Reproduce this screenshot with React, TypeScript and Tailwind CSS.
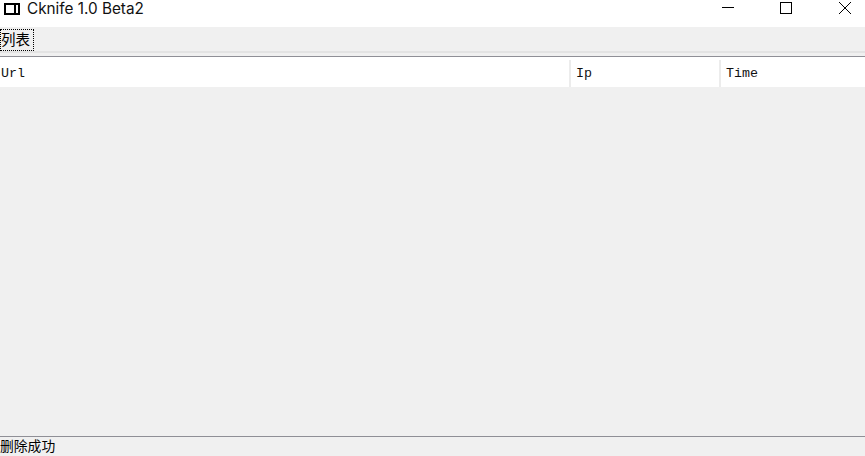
export default function App() {
  const cjk = "font-['Noto_Sans_CJK_SC',sans-serif]";

  return (
    <div className="flex h-[456px] w-[865px] flex-col overflow-hidden bg-[#f0f0f0] text-black">
      {/* title bar */}
      <div className="flex h-[27px] items-start bg-white">
        <div className="ml-[4px] mt-[3px] flex h-[12px] w-[16px] justify-end border-2 border-black">
          <div className="mr-[2px] w-[2px] bg-black"></div>
        </div>
        <div className="ml-[7px] font-['Inter',sans-serif] text-[15.3px] leading-[17px] text-[#111]">Cknife 1.0 Beta2</div>
        <div className="ml-auto flex items-start">
          <svg width="14" height="14" viewBox="0 0 14 14" className="mr-[45px]">
            <path d="M2 7.5H14" stroke="#000" strokeWidth="1" />
          </svg>
          <svg width="13" height="13" viewBox="0 0 13 13" className="mr-[46px] mt-[1px]">
            <rect x="1.5" y="1.5" width="11" height="11" fill="none" stroke="#000" strokeWidth="1" />
          </svg>
          <svg width="14" height="14" viewBox="0 0 14 14" className="mr-[13px] mt-[1px]">
            <path d="M1 1L13 13M13 1L1 13" stroke="#000" strokeWidth="1" />
          </svg>
        </div>
      </div>

      {/* tabs */}
      <div className="flex h-[26px] items-start border-b-2 border-[#e3e3e3]">
        <div className={`mt-[2px] flex h-[22px] w-[34px] items-start border border-dotted border-black ${cjk} text-[14.5px] leading-[17px]`}>
          列表
        </div>
      </div>

      {/* table */}
      <div className="mt-[3px] flex h-[31px] border-t border-[#8f8f96] bg-white pt-[3px] font-['Liberation_Mono',monospace] text-[13.33px] text-[#111]">
        <div className="flex w-[569px] items-center pl-[1px]">Url</div>
        <div className="flex w-[150px] items-center border-l-2 border-[#ececec] pl-[5px]">Ip</div>
        <div className="flex flex-1 items-center border-l-2 border-[#ececec] pl-[5px]">Time</div>
      </div>

      <div className="flex-1"></div>

      {/* status bar */}
      <div className={`h-[20px] border-t border-[#8f8f96] ${cjk} text-[13.8px] leading-[16px]`}>
        删除成功
      </div>
    </div>
  );
}
